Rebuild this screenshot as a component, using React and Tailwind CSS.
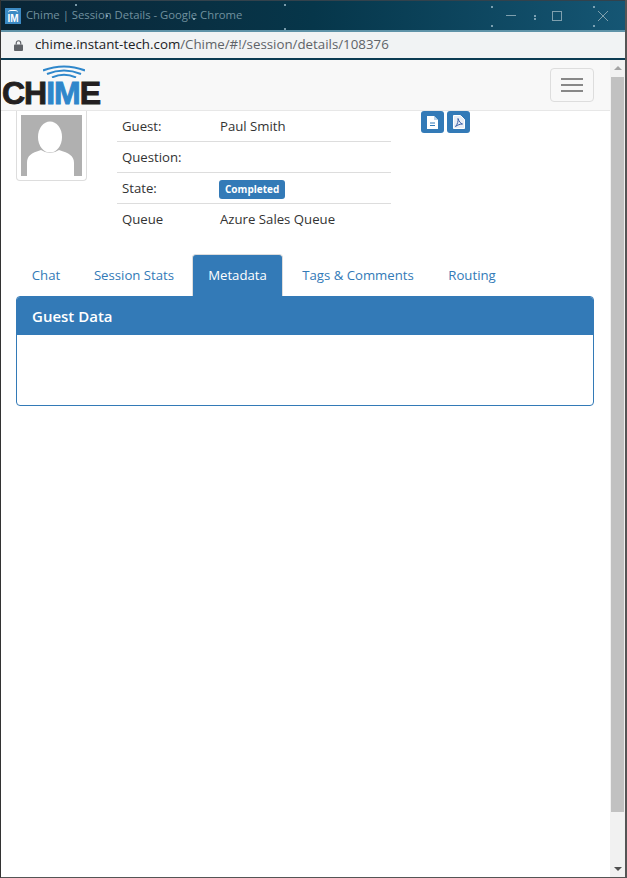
const stars = [
  "left-[74px] top-[3px]",
  "left-[105px] top-[14px]",
  "left-[283px] top-[3px]",
  "left-[283px] top-[27px]",
  "left-[192px] top-[17px]",
  "left-[490px] top-[5px]",
  "left-[490px] top-[24px]",
  "left-[533px] top-[14px]",
  "left-[533px] top-[17px]",
  "left-[592px] top-[5px]",
  "left-[592px] top-[24px]",
];

const tabs = [
  { label: "Chat", width: "w-[60px]" },
  { label: "Session Stats", width: "w-[110px]" },
  { label: "Metadata", width: "w-[91px]", active: true },
  { label: "Tags & Comments", width: "w-[144px]" },
  { label: "Routing", width: "w-[78px]" },
];

function WindowBar() {
  return (
    <div className="relative flex h-[30px] shrink-0 items-center border-t border-[#33424c] bg-gradient-to-r from-[#0a2536] via-[#06364a] to-[#155674] pl-[4px]">
      {stars.map((pos) => (
        <span key={pos} className={`absolute h-[2px] w-[2px] rounded-full bg-[#9fbccb] ${pos}`} />
      ))}
      {/* app icon */}
      <div className="flex h-[16px] w-[16px] flex-col items-center justify-end bg-[#3c8ac4]">
        <span className="h-[3px] w-[10px] rounded-t-full border-t border-white" />
        <span className="font-['Liberation_Sans',sans-serif] text-[10px] leading-[11px] font-bold text-white">IM</span>
      </div>
      <span className="ml-[5px] text-[11.3px] text-[#71919f]">Chime | Session Details - Google Chrome</span>
      <div className="ml-auto flex items-center pr-[17px]">
        <span className="h-px w-[10px] bg-[#7fa0ae]" />
        <span className="ml-[36px] h-[10px] w-[10px] border border-[#7fa0ae]" />
        <svg width="10" height="10" viewBox="0 0 10 10" className="ml-[36px] stroke-[#7fa0ae]">
          <path d="M0 0l10 10M10 0L0 10" fill="none" />
        </svg>
      </div>
    </div>
  );
}

function AddressBar() {
  return (
    <div className="flex h-[30px] shrink-0 items-center border-t-2 border-b-2 border-t-[#5f93a8] border-b-[#0b3b52] bg-[#f1f3f4] pl-[13px]">
      <svg width="9" height="11" viewBox="0 0 10 12" className="fill-[#5f6368]">
        <path d="M1 5h8a1 1 0 0 1 1 1v5a1 1 0 0 1-1 1H1a1 1 0 0 1-1-1V6a1 1 0 0 1 1-1z" />
        <path d="M2.500 5V3.200a2.500 2.500 0 0 1 5 0V5" fill="none" stroke="#5f6368" strokeWidth="1.3" />
      </svg>
      <span className="ml-[12px] text-[13.3px] leading-none text-[#202124]">
        chime.instant-tech.com<span className="text-[#5f6368]">/Chime/#!/session/details/108376</span>
      </span>
    </div>
  );
}

function Logo() {
  return (
    <div className="relative h-[44px] w-[100px]">
      <svg width="42" height="13" viewBox="0 0 42 13" className="absolute top-[2px] left-[42px] fill-none stroke-[#2f87cb]">
        <path d="M0 5.500Q21 -2.500 42 5.500" strokeWidth="2.200" />
        <path d="M4 9Q21 2 38 9" strokeWidth="2.200" />
        <path d="M9 12.500Q21 7 33 12.500" strokeWidth="2" />
      </svg>
      <div className="absolute top-[17px] left-[1px] font-['Liberation_Sans',sans-serif] text-[32px] leading-[26px] font-bold tracking-[-1px] text-[#231f20] [-webkit-text-stroke-width:0.9px]">
        CH<span className="text-[#2f87cb]">IM</span>E
      </div>
    </div>
  );
}

function Navbar() {
  return (
    <div className="flex h-[51px] shrink-0 items-center justify-between border-b border-[#e7e7e7] bg-[#f8f8f8] pr-[16px]">
      <Logo />
      <button className="flex h-[34px] w-[44px] flex-col items-center justify-center gap-[4px] rounded border border-[#dddddd]">
        <span className="h-[2px] w-[22px] bg-[#888888]" />
        <span className="h-[2px] w-[22px] bg-[#888888]" />
        <span className="h-[2px] w-[22px] bg-[#888888]" />
      </button>
    </div>
  );
}

function Avatar() {
  return (
    <div className="h-[70px] w-[71px] shrink-0 rounded-b border border-t-0 border-[#dddddd] px-[4px]">
      <div className="mt-[4px] h-[61px] w-[61px] bg-[#b0b0b0]">
        <svg viewBox="0 0 61 61" width="61" height="61" className="fill-white">
          <ellipse cx="29" cy="22" rx="12" ry="15.500" />
          <path d="M6 61V48C6 41 10 38 20 35Q29 41 38 35C48 38 53 41 53 48V61Z" />
        </svg>
      </div>
    </div>
  );
}

function InfoRow({ label, children, last }) {
  return (
    <div className={`flex h-[31px] items-center pl-[5px] text-[#333333] ${last ? "" : "border-b border-[#dddddd] pt-[2px]"}`}>
      <span className="w-[98px]">{label}</span>
      {children}
    </div>
  );
}

function ActionButton({ children }) {
  return (
    <button className="flex h-[22px] w-[23px] items-center justify-center rounded-[3px] bg-[#337ab7]">
      {children}
    </button>
  );
}

export default function App() {
  return (
    <div className="flex h-[878px] w-[627px] flex-col overflow-hidden border-r-2 border-b border-l border-r-[#555555] border-b-[#555555] border-l-[#333333] bg-white font-['Open_Sans',sans-serif] text-[13.2px]">
      <WindowBar />
      <AddressBar />
      <div className="flex min-h-0 flex-1">
        <div className="min-w-0 flex-1">
          <Navbar />
          <div className="flex pl-[15px]">
            <Avatar />
            <div className="ml-[30px] w-[274px]">
              <InfoRow label="Guest:">Paul Smith</InfoRow>
              <InfoRow label="Question:" />
              <InfoRow label="State:">
                <span className="-ml-px flex h-[19px] items-center rounded-[3px] bg-[#337ab7] px-[6px] text-[10px] font-bold text-white">
                  Completed
                </span>
              </InfoRow>
              <InfoRow label="Queue" last>
                Azure Sales Queue
              </InfoRow>
            </div>
            <div className="ml-[30px] flex gap-[3px]">
              <ActionButton>
                <svg width="11" height="13" viewBox="0 0 11 13">
                  <path d="M0 0h7l4 4v9H0z" fill="white" />
                  <path d="M7 0v4h4" fill="#b9d2e8" />
                  <path d="M3 7h5M3 9.500h5" stroke="#337ab7" strokeWidth="1.200" />
                </svg>
              </ActionButton>
              <ActionButton>
                <svg width="12" height="14" viewBox="0 0 12 14">
                  <path d="M0.500 0.500h7l4 4v9h-11z" fill="#e8edf5" stroke="white" />
                  <path d="M2.500 11.500c2-2 3-6 2.500-8 1 3 2.500 5 4.500 5.500-2.500 0-5 1-7 2.500z" fill="none" stroke="#3a5fa8" />
                </svg>
              </ActionButton>
            </div>
          </div>
          <div className="mt-[20px] mr-[16px] ml-[15px]">
            <div className="flex gap-[3px]">
              {tabs.map((tab) => (
                <div
                  key={tab.label}
                  className={`flex items-center justify-center rounded-t ${tab.width} ${
                    tab.active
                      ? "-mt-px h-[42px] border border-b-0 border-[#dddddd] bg-[#337ab7] text-white"
                      : "h-[41px] text-[#337ab7]"
                  }`}
                >
                  {tab.label}
                </div>
              ))}
            </div>
            <div className="h-[110px] overflow-hidden rounded border border-[#337ab7]">
              <div className="flex h-[38px] items-center bg-[#337ab7] pl-[15px] text-[15px] font-semibold text-white">
                Guest Data
              </div>
            </div>
          </div>
        </div>
        {/* scrollbar */}
        <div className="flex w-[15px] shrink-0 flex-col items-center bg-[#f1f1f1]">
          <span className="mt-[6px] h-0 w-0 border-x-[4px] border-b-[4px] border-x-transparent border-b-[#a3a3a3]" />
          <span className="mt-[7px] h-[735px] w-[13px] bg-[#c1c1c1]" />
          <span className="mt-auto mb-[6px] h-0 w-0 border-x-[4px] border-t-[4px] border-x-transparent border-t-[#505050]" />
        </div>
      </div>
    </div>
  );
}
